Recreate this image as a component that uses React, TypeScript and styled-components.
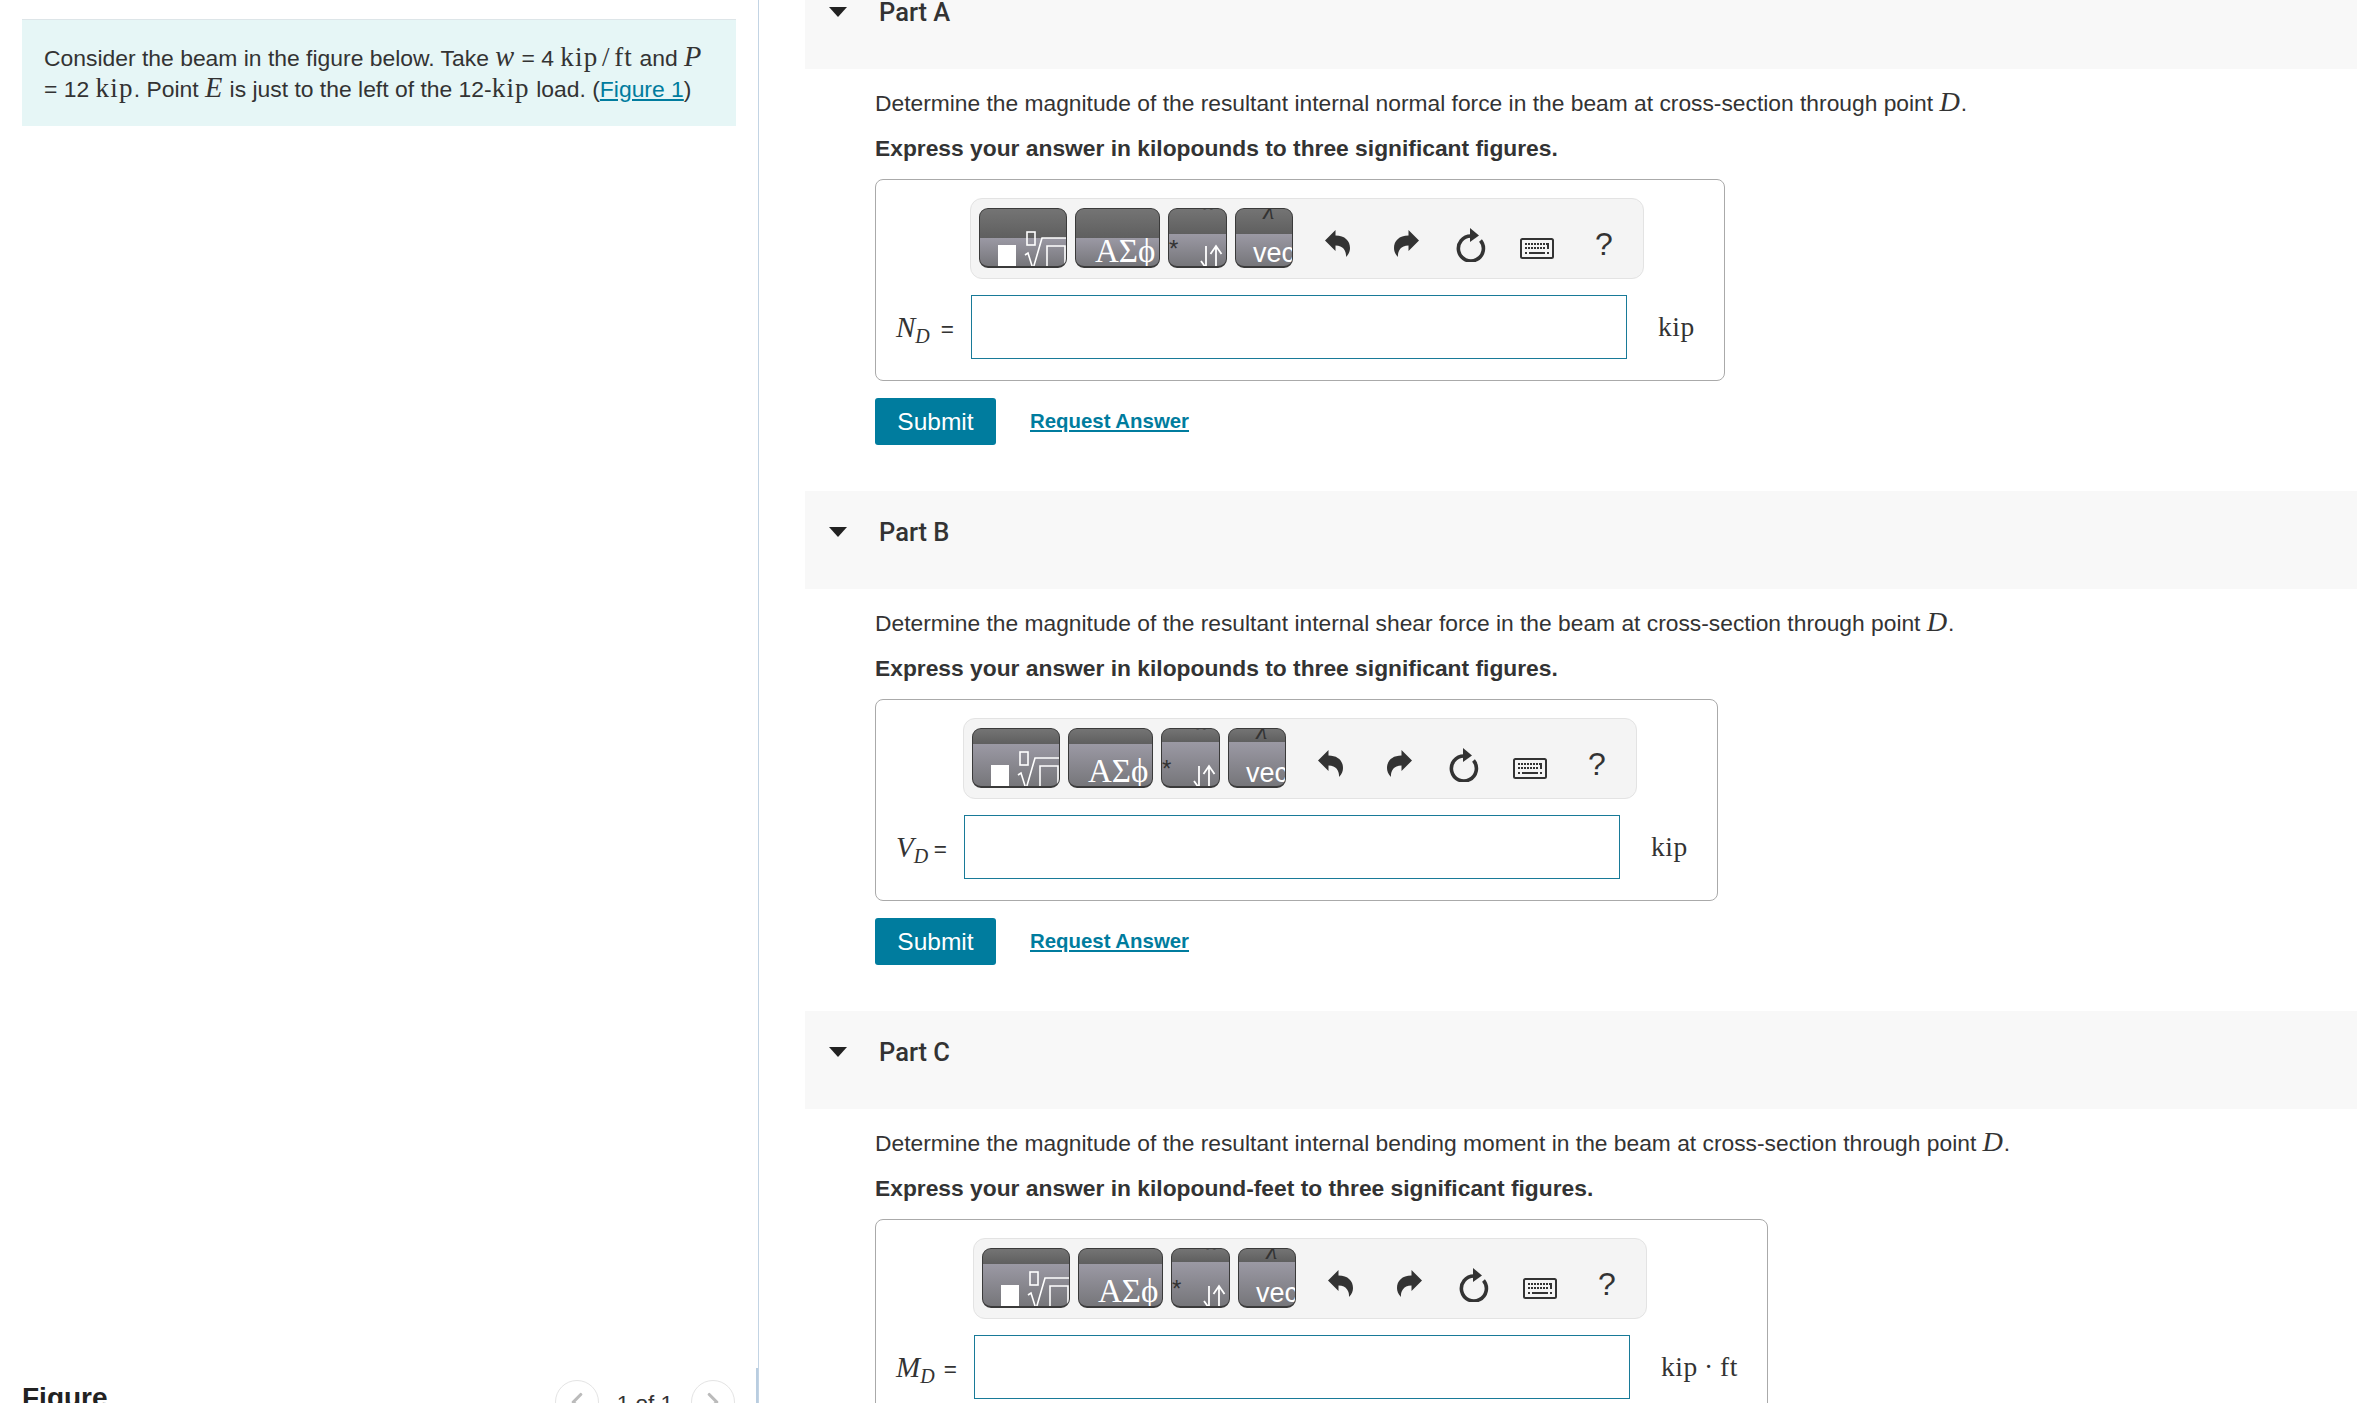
import React from 'react';
import styled, { createGlobalStyle } from 'styled-components';
import { ChevronLeft, ChevronRight } from 'lucide-react';

const GlobalStyle = createGlobalStyle`
    html, body{
        margin: 0;
        height: 100%;
        overflow: hidden;
        background: #fff;
    }
    body{
        font-family: "Liberation Sans", Arial, sans-serif;
        color: #333;
    }
`

const Page = styled.div`
    display: flex;
    width: 100%;
    height: 100vh;
    overflow: hidden;
`

const LeftPane = styled.aside`
    position: relative;
    box-sizing: border-box;
    flex: 0 0 759px;
    height: 100%;
    padding: 19px 22px 0 22px;
    border-right: 1px solid #c3d4e4;
    overflow: hidden;

    &::after{
        content: '';
        position: absolute;
        right: 0;
        top: 1368px;
        bottom: 0;
        width: 2px;
        background: #b9cde0;
    }
`

const Intro = styled.div`
    box-sizing: border-box;
    height: 107px;
    padding: 23px 10px 0 22px;
    background: #e6f6f6;
    border-top: 1px solid #dde5e8;
    font-size: 22.9px;
    line-height: 31px;
`

const TextLink = styled.a`
    color: #007c9e;
    text-decoration: underline;
`

const Var = styled.i`
    font-family: "Liberation Serif", "Times New Roman", serif;
    font-size: 1.24em;
    line-height: 1;
    letter-spacing: 0.03em;
`

const Rm = styled.span`
    font-family: "Liberation Serif", "Times New Roman", serif;
    font-size: 1.18em;
    line-height: 1;
    letter-spacing: 0.045em;
`

const FigureHead = styled.div`
    display: flex;
    justify-content: space-between;
    align-items: flex-start;
    margin-top: 1254px;
    padding-right: 1px;
`

const FigureTitle = styled.h2`
    margin: 0;
    padding-top: 3px;
    font-size: 28px;
    line-height: 30px;
    font-weight: 700;
    color: #222;
`

const Pager = styled.div`
    display: flex;
    align-items: flex-start;
    gap: 18px;
    font-size: 22.5px;
    line-height: 44px;
`

const PagerText = styled.span`
    padding-top: 2px;
`

const PagerButton = styled.span`
    box-sizing: border-box;
    display: flex;
    align-items: center;
    justify-content: center;
    width: 44px;
    height: 44px;
    border: 1px solid #e4e4e4;
    border-radius: 50%;
    color: #bbb;
`

const RightPane = styled.main`
    flex: 1;
    min-width: 0;
    height: 100%;
    padding-left: 46px;
    overflow: hidden;
`

const Parts = styled.div`
    margin-top: -29px;
`

const PartHead = styled.div`
    display: flex;
    align-items: flex-start;
    box-sizing: border-box;
    height: 98px;
    padding: 26px 0 0 24px;
    background: #f8f8f8;
`

const Caret = styled.span`
    width: 0;
    height: 0;
    margin: 10px 32px 0 0;
    border-left: 9px solid transparent;
    border-right: 9px solid transparent;
    border-top: 10px solid #222;
`

const PartTitle = styled.h3`
    margin: 0;
    font-family: Roboto, "Liberation Sans", sans-serif;
    font-size: 25.5px;
    line-height: 30px;
    font-weight: 500;
    color: #333;
`

const PartBody = styled.div`
    padding: 19px 0 46px 70px;
`

const Prompt = styled.p`
    margin: 0 0 15px;
    font-size: 22.8px;
    line-height: 30px;
`

const Instruction = styled.p`
    margin: 0 0 16px;
    font-size: 22.8px;
    line-height: 30px;
    font-weight: 700;
`

const AnswerBox = styled.div`
    display: inline-grid;
    grid-template-columns: auto 656px auto;
    align-items: center;
    align-content: start;
    box-sizing: border-box;
    height: 202px;
    padding: 18px 29px 0 20px;
    border: 1px solid #aaa;
    border-radius: 8px;
    vertical-align: top;
`

const Toolbar = styled.div`
    grid-column: 2 / 4;
    display: flex;
    box-sizing: border-box;
    width: 674px;
    height: 81px;
    margin: 0 0 16px -1px;
    padding: 9px 8px;
    background: #f4f4f4;
    border: 1px solid #e3e3e3;
    border-radius: 12px;
`

const PaletteGroup = styled.div`
    display: flex;
    gap: 8px;
    margin-right: 10px;
`

const PaletteButton = styled.div<{ $w: number; $band: number }>`
    position: relative;
    box-sizing: border-box;
    width: ${(p) => p.$w}px;
    height: 60px;
    border: 1px solid #3a3a3a;
    border-bottom-width: 2px;
    border-radius: 9px;
    overflow: hidden;
    background: linear-gradient(
        #747474 0,
        #5f5f5f ${(p) => p.$band}px,
        #9b99a4 ${(p) => p.$band}px,
        #76767a 100%
    );
    color: #fff;
`

const WhiteSquare = styled.span`
    position: absolute;
    left: 18px;
    top: 36px;
    width: 18px;
    height: 24px;
    background: #fff;
`

const GlyphIcon = styled.svg`
    position: absolute;
    left: 0;
    top: 0;
`

const GreekLabel = styled.span`
    position: absolute;
    left: 19px;
    top: 22px;
    font-family: "Liberation Serif", serif;
    font-size: 33px;
    line-height: 40px;
    white-space: nowrap;
`

const StarMark = styled.span`
    position: absolute;
    left: 0;
    top: 25px;
    font-size: 24px;
    line-height: 30px;
    color: #333;
`

const InfinityPeek = styled.span`
    position: absolute;
    left: 30px;
    top: -17px;
    font-family: "DejaVu Sans", sans-serif;
    font-size: 22px;
    line-height: 26px;
    color: #333;
`

const LambdaPeek = styled.span`
    position: absolute;
    left: 27px;
    top: -13px;
    font-family: "Liberation Serif", serif;
    font-style: italic;
    font-size: 26px;
    line-height: 30px;
    color: #333;
`

const ParenPeek = styled.span`
    position: absolute;
    left: -8px;
    top: 34px;
    font-size: 26px;
    line-height: 28px;
    color: #333;
`

const VecLabel = styled.span`
    position: absolute;
    left: 17px;
    top: 28px;
    font-size: 27px;
    line-height: 32px;
`

const ToolCell = styled.div<{ $w: number; $drop: number }>`
    display: flex;
    align-items: center;
    justify-content: center;
    box-sizing: border-box;
    flex: 0 0 ${(p) => p.$w}px;
    padding-top: ${(p) => p.$drop}px;
    color: #333;
`

const HelpMark = styled.span`
    font-size: 32px;
    line-height: 40px;
    color: #333;
`

const MathLabel = styled.div<{ $w: number }>`
    display: flex;
    align-items: baseline;
    justify-content: space-between;
    width: ${(p) => p.$w}px;
    margin-right: 17px;
    font-size: 22.5px;
    white-space: nowrap;
`

const MathSymbol = styled.span`
    display: inline-flex;
    align-items: baseline;
`

const MathVar = styled.i`
    font-family: "Liberation Serif", serif;
    font-size: 29px;
`

const MathSub = styled.i`
    position: relative;
    top: 6px;
    font-family: "Liberation Serif", serif;
    font-size: 20px;
`

const AnswerInput = styled.input`
    box-sizing: border-box;
    width: 656px;
    height: 64px;
    border: 1px solid #187a98;
    background: #fff;
    outline: none;
`

const Unit = styled.span`
    margin-left: 31px;
    font-family: "Liberation Serif", serif;
    font-size: 27.5px;
    letter-spacing: 0.6px;
    white-space: nowrap;
`

const Actions = styled.div`
    display: flex;
    align-items: center;
    gap: 34px;
    margin-top: 17px;
`

const SubmitButton = styled.button`
    width: 121px;
    height: 47px;
    padding: 0;
    border: 0;
    border-radius: 3px;
    background: #007c9e;
    color: #fff;
    font-family: inherit;
    font-size: 24.5px;
`

const RequestLink = styled.a`
    color: #007c9e;
    font-size: 20.4px;
    font-weight: 700;
    text-decoration: underline;
`

function UndoIcon({ flip }: { flip?: boolean }) {
    return (
        <svg width="25" height="27" viewBox="0 0 25 27" fill="#333" style={flip ? { transform: 'scaleX(-1)' } : undefined}>
            <path d="M0 10.5 L10.5 0 V5.5 C20 5.5 25 11 25 18 C25 21 24 24 21 27 C21.5 22 19 15.5 10.5 15.5 V21 Z" />
        </svg>
    );
}

function ReloadIcon() {
    return (
        <svg width="30" height="34" viewBox="0 0 30 34" fill="none">
            <path d="M15 8 A12.5 12.5 0 1 0 24.5 12.5" stroke="#333" strokeWidth="3.6" />
            <path d="M14 0 L23 7.5 L14 14 Z" fill="#333" />
        </svg>
    );
}

function KeyboardIcon() {
    const top = [5, 8, 11, 14, 17, 20, 23, 26];
    const mid = [5, 8, 11, 14, 17, 20, 23];
    return (
        <svg width="34" height="21" viewBox="0 0 34 21" fill="#333">
            <rect x="1" y="1" width="32" height="19" rx="1.5" fill="#f4f4f4" stroke="#333" strokeWidth="2" />
            {top.map((x) => <rect key={x} x={x} y="5" width="2" height="2" />)}
            {mid.map((x) => <rect key={x} x={x} y="9" width="2" height="2" />)}
            <rect x="27" y="5" width="2" height="6" />
            <rect x="5" y="14" width="2" height="2" />
            <rect x="9" y="14" width="16" height="2" />
            <rect x="27" y="14" width="2" height="2" />
        </svg>
    );
}

function Palette({ band, narrowBand }: { band: number; narrowBand: number }) {
    return (
        <PaletteGroup>
            <PaletteButton $w={88} $band={band}>
                <WhiteSquare />
                <GlyphIcon width="88" height="60" viewBox="0 0 88 60" fill="none" stroke="#fff" strokeWidth="1.6">
                    <rect x="47" y="23" width="8" height="13" />
                    <path d="M45 46 L48 44 L53 60 L62 29 H86" />
                    <path d="M67 60 V37 H85 V60" />
                </GlyphIcon>
            </PaletteButton>
            <PaletteButton $w={85} $band={band}>
                <GreekLabel>ΑΣϕ</GreekLabel>
            </PaletteButton>
            <PaletteButton $w={59} $band={narrowBand}>
                <InfinityPeek>∞</InfinityPeek>
                <StarMark>*</StarMark>
                <GlyphIcon width="59" height="60" viewBox="0 0 59 60" fill="none" stroke="#fff" strokeWidth="1.8">
                    <path d="M37 37 V59 L32 52" />
                    <path d="M47 60 V37 M41.5 45 L47 37 L52.5 45" />
                </GlyphIcon>
            </PaletteButton>
            <PaletteButton $w={58} $band={narrowBand}>
                <LambdaPeek>λ</LambdaPeek>
                <ParenPeek>)</ParenPeek>
                <VecLabel>vec</VecLabel>
            </PaletteButton>
        </PaletteGroup>
    );
}

type PartInfo = {
    title: string;
    quantity: string;
    express: string;
    symbol: string;
    labelWidth: number;
    unit: string;
    band: number;
    narrowBand: number;
};

const parts: PartInfo[] = [
    { title: 'Part A', quantity: 'normal force', express: 'kilopounds', symbol: 'N', labelWidth: 58, unit: 'kip', band: 29, narrowBand: 25 },
    { title: 'Part B', quantity: 'shear force', express: 'kilopounds', symbol: 'V', labelWidth: 51, unit: 'kip', band: 15, narrowBand: 13 },
    { title: 'Part C', quantity: 'bending moment', express: 'kilopound-feet', symbol: 'M', labelWidth: 61, unit: 'kip\u2009·\u2009ft', band: 15, narrowBand: 13 },
];

function Part({ part }: { part: PartInfo }) {
    return (
        <section>
            <PartHead>
                <Caret />
                <PartTitle>{part.title}</PartTitle>
            </PartHead>
            <PartBody>
                <Prompt>
                    Determine the magnitude of the resultant internal {part.quantity} in the beam at cross-section through point <Var>D</Var>.
                </Prompt>
                <Instruction>Express your answer in {part.express} to three significant figures.</Instruction>
                <AnswerBox>
                    <span />
                    <Toolbar>
                        <Palette band={part.band} narrowBand={part.narrowBand} />
                        <ToolCell $w={68} $drop={10}><UndoIcon /></ToolCell>
                        <ToolCell $w={70} $drop={10}><UndoIcon flip /></ToolCell>
                        <ToolCell $w={60} $drop={12}><ReloadIcon /></ToolCell>
                        <ToolCell $w={72} $drop={20}><KeyboardIcon /></ToolCell>
                        <ToolCell $w={62} $drop={11}><HelpMark>?</HelpMark></ToolCell>
                    </Toolbar>
                    <MathLabel $w={part.labelWidth}>
                        <MathSymbol>
                            <MathVar>{part.symbol}</MathVar>
                            <MathSub>D</MathSub>
                        </MathSymbol>
                        =
                    </MathLabel>
                    <AnswerInput />
                    <Unit>{part.unit}</Unit>
                </AnswerBox>
                <Actions>
                    <SubmitButton>Submit</SubmitButton>
                    <RequestLink href="#">Request Answer</RequestLink>
                </Actions>
            </PartBody>
        </section>
    );
}

export default function App() {
    return (
        <Page>
            <GlobalStyle />
            <LeftPane>
                <Intro>
                    Consider the beam in the figure below. Take <Var>w</Var> = 4 <Rm>kip{'\u200a'}/{'\u200a'}ft</Rm> and <Var>P</Var>
                    <br />
                    = 12 <Rm>kip</Rm>. Point <Var>E</Var> is just to the left of the 12-<Rm>kip</Rm> load. (<TextLink href="#">Figure 1</TextLink>)
                </Intro>
                <FigureHead>
                    <FigureTitle>Figure</FigureTitle>
                    <Pager>
                        <PagerButton><ChevronLeft size={30} strokeWidth={2.5} /></PagerButton>
                        <PagerText>1 of 1</PagerText>
                        <PagerButton><ChevronRight size={30} strokeWidth={2.5} /></PagerButton>
                    </Pager>
                </FigureHead>
            </LeftPane>
            <RightPane>
                <Parts>
                    {parts.map((part) => <Part key={part.title} part={part} />)}
                </Parts>
            </RightPane>
        </Page>
    );
}
